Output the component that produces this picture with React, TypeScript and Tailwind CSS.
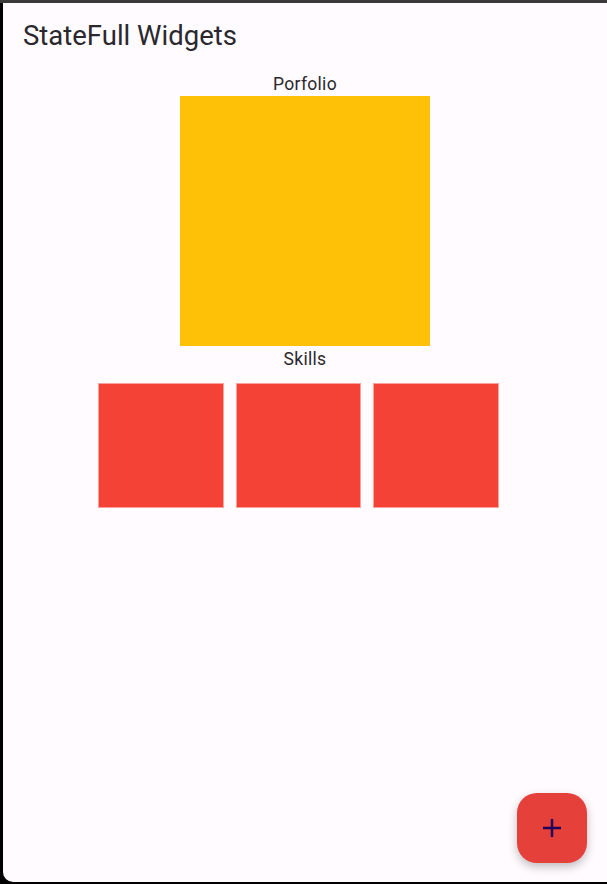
import React from "react";

export default function App() {
  return (
    <div className="w-[607px] h-[884px] bg-black overflow-hidden" style={{ fontFamily: "Roboto, 'Noto Sans', sans-serif" }}>
      <div className="h-[3px] bg-[#3a3a3a]" />
      <div className="relative ml-[3px] h-[879px] bg-[#fffbfe] rounded-bl-[10px] text-[#2a282e]">
        <div className="h-[68px] pl-[20px] pt-[17px]">
          <div className="text-[27.5px] leading-[32px]">StateFull Widgets</div>
        </div>
        <div className="flex flex-col items-center">
          <div className="text-[17.5px] leading-[23px] pt-[2px] tracking-[0.3px]">Porfolio</div>
          <div className="w-[250px] h-[250px] bg-[#ffc107]" />
          <div className="text-[17.5px] leading-[24px] pt-[1px] tracking-[0.3px]">Skills</div>
        </div>
        <div className="flex gap-[12px] pl-[95px] pt-[12px]">
          <div className="w-[125.5px] h-[125px] bg-[#f44336] border border-[#f8a29b]" />
          <div className="w-[125.5px] h-[125px] bg-[#f44336] border border-[#f8a29b]" />
          <div className="w-[125.5px] h-[125px] bg-[#f44336] border border-[#f8a29b]" />
        </div>
        <button className="absolute right-[20px] bottom-[19px] w-[70px] h-[70px] rounded-[20px] bg-[#e5403a] flex items-center justify-center shadow-[0_4px_10px_rgba(0,0,0,0.25)]">
          <svg width="22" height="22" viewBox="0 0 22 22">
            <path d="M11 2v18M2 11h18" stroke="#21005d" strokeWidth="2.5" />
          </svg>
        </button>
      </div>
    </div>
  );
}
